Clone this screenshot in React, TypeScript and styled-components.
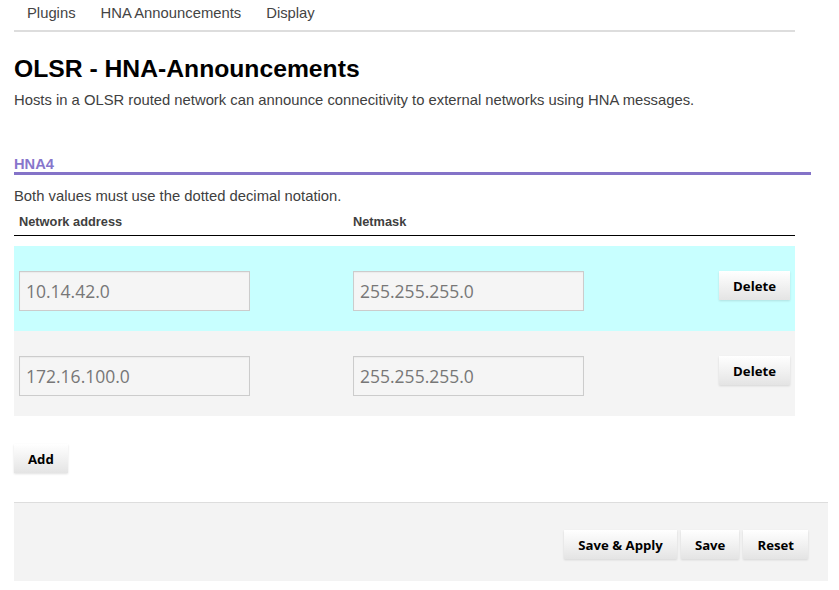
import React from "react";
import styled, { createGlobalStyle } from "styled-components";

const Global = createGlobalStyle`
  html, body { margin: 0; padding: 0; background: #fff; }
  body {
    font-family: "Liberation Sans", Arial, sans-serif;
    font-size: 14.8px;
    color: #404040;
  }
`;

const Page = styled.div`
  padding: 0 0 0 14px;
  width: 814px;
`;

const Tabs = styled.ul`
  list-style: none;
  margin: 0;
  padding: 0;
  width: 781px;
  display: flex;
  height: 30px;
  border-bottom: 2px solid #dddddd;
`;

const Tab = styled.li`
  padding: 0 12px 0 13px;
  line-height: 26px;
  font-size: 14.8px;
  color: #444;
`;

const Title = styled.h2`
  margin: 23px 0 0;
  font-size: 24.7px;
  line-height: 28px;
  font-weight: 700;
  color: #000;
`;

const Lead = styled.p`
  margin: 6.5px 0 0;
  line-height: 20px;
`;

const Section = styled.section`
  margin-top: 46.5px;
`;

const SectionTitle = styled.h3`
  margin: 0;
  width: 797px;
  font-size: 14.7px;
  line-height: 16px;
  font-weight: 700;
  color: #8776cc;
  border-bottom: 3px solid #8473c8;
`;

const Note = styled.p`
  margin: 11px 0 0;
  line-height: 20px;
`;

const Table = styled.div`
  width: 781px;
`;

const HeadRow = styled.div`
  display: grid;
  grid-template-columns: 334px 334px 1fr;
  border-bottom: 1px solid #000;
  margin-bottom: 10px;
`;

const HeadCell = styled.div`
  padding: 8px 5px 5px;
  font-size: 12.8px;
  line-height: 16px;
  font-weight: 700;
  color: #404040;
`;

const Row = styled.div<{ $tone: "cyan" | "gray" }>`
  display: grid;
  grid-template-columns: 334px 334px 1fr;
  height: 85px;
  box-sizing: border-box;
  padding-top: 25px;
  background: ${(p) => (p.$tone === "cyan" ? "#c8ffff" : "#f4f4f4")};
`;

const Cell = styled.div<{ $end?: boolean }>`
  padding: 0 5px;
  display: flex;
  align-items: flex-start;
  justify-content: ${(p) => (p.$end ? "flex-end" : "flex-start")};
`;

const Field = styled.input`
  box-sizing: border-box;
  width: 231px;
  height: 40px;
  margin: 0;
  padding: 0 6px;
  border: 1px solid #cccccc;
  background: #f5f5f5;
  box-shadow: inset 0 1px 1px rgba(0, 0, 0, 0.04);
  font-family: "Open Sans", sans-serif;
  font-size: 17.5px;
  color: #777;
  outline: none;
`;

const Button = styled.button`
  box-sizing: border-box;
  height: 29px;
  margin: 0;
  padding: 0 14px;
  border: none;
  background: linear-gradient(#ffffff, #e4e4e4);
  box-shadow: 0 1px 2px rgba(0, 0, 0, 0.12);
  font-family: "Open Sans", sans-serif;
  font-weight: 700;
  font-size: 13.2px;
  color: #000;
  cursor: pointer;
`;

const AddWrap = styled.div`
  margin-top: 28px;
`;

const Footer = styled.div`
  margin-top: 29px;
  border-top: 1px solid #dddddd;
  background: #f3f3f3;
  height: 79px;
  box-sizing: border-box;
  padding: 27px 20px 0 0;
  display: flex;
  justify-content: flex-end;
  align-items: flex-start;
  gap: 4px;
`;

const rows = [
  { tone: "cyan" as const, net: "10.14.42.0", mask: "255.255.255.0" },
  { tone: "gray" as const, net: "172.16.100.0", mask: "255.255.255.0" },
];

export default function App() {
  return (
    <>
      <Global />
      <Page>
        <Tabs>
          <Tab>Plugins</Tab>
          <Tab>HNA Announcements</Tab>
          <Tab>Display</Tab>
        </Tabs>
        <Title>OLSR - HNA-Announcements</Title>
        <Lead>
          Hosts in a OLSR routed network can announce connecitivity to external networks using HNA messages.
        </Lead>
        <Section>
          <SectionTitle>HNA4</SectionTitle>
          <Note>Both values must use the dotted decimal notation.</Note>
          <Table>
            <HeadRow>
              <HeadCell>Network address</HeadCell>
              <HeadCell>Netmask</HeadCell>
              <HeadCell />
            </HeadRow>
            {rows.map((r) => (
              <Row key={r.net} $tone={r.tone}>
                <Cell>
                  <Field defaultValue={r.net} />
                </Cell>
                <Cell>
                  <Field defaultValue={r.mask} />
                </Cell>
                <Cell $end>
                  <Button>Delete</Button>
                </Cell>
              </Row>
            ))}
          </Table>
          <AddWrap>
            <Button>Add</Button>
          </AddWrap>
        </Section>
        <Footer>
          <Button>Save &amp; Apply</Button>
          <Button>Save</Button>
          <Button>Reset</Button>
        </Footer>
      </Page>
    </>
  );
}
